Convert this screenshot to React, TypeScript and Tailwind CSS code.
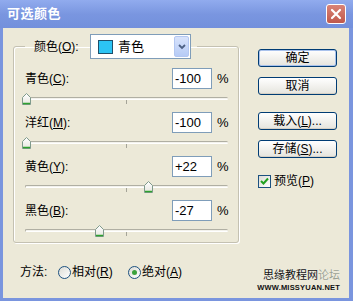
import React from "react";

const FONT = { fontFamily: '"Liberation Sans", "Noto Sans CJK SC", sans-serif' };

interface SliderRowProps {
  label: string;
  hotkey: string;
  value: number;
}

function Thumb() {
  return (
    <svg width="9" height="12" viewBox="0 0 9 12">
      <defs>
        <linearGradient id="tg" x1="0" y1="0" x2="0" y2="1">
          <stop offset="0" stopColor="#ffffff" />
          <stop offset="1" stopColor="#e6e6df" />
        </linearGradient>
      </defs>
      <polygon points="0.5,4.5 4.5,0.5 8.5,4.5 8.5,11.5 0.5,11.5" fill="url(#tg)" stroke="#7f9a8c" />
      <line x1="1" y1="10.5" x2="8" y2="10.5" stroke="#2ea12e" strokeWidth="1.5" />
    </svg>
  );
}

function SliderRow({ label, hotkey, value }: SliderRowProps) {
  const sign = value > 0 ? "+" : "";
  return (
    <div className="flex flex-col h-[44px]">
      <div className="flex items-center h-[21px]">
        <div className="ml-[11px] w-[147px] text-[12px] text-black">
          {label}(<u>{hotkey}</u>):
        </div>
        <div className="w-[40px] h-[21px] bg-white border border-[#7f9db9] flex items-center pl-[2px] text-[13px] text-black">
          {sign}
          {value}
        </div>
        <div className="ml-[5px] text-[13px] text-black">%</div>
      </div>
      <div className="relative ml-[8px] w-[208px] h-[23px]">
        <div className="absolute left-[3px] right-[2px] top-[8px] h-[3px] rounded-full bg-[#f3f2ec] border-t border-l border-[#b0afa3] border-b border-b-white" />
        <div className="absolute left-[104px] top-[11px] w-px h-[4px] bg-[#a5a498]" />
        <div className="absolute top-[4px]" style={{ left: 99.5 + value }}>
          <Thumb />
        </div>
      </div>
    </div>
  );
}

function XPButton({ children, primary }: { children: React.ReactNode; primary?: boolean }) {
  return (
    <div
      className={
        "w-[79px] h-[18px] rounded-[3px] border flex items-center justify-center text-[12px] text-black bg-gradient-to-b from-white to-[#e5e4dd] " +
        (primary
          ? "border-[#003c74] shadow-[inset_0_0_0_1px_#a9c2ec]"
          : "border-[#003c74] shadow-[inset_0_-1px_0_#d6d0c5]")
      }
    >
      {children}
    </div>
  );
}

function Radio({ checked }: { checked?: boolean }) {
  return (
    <div className="w-[13px] h-[13px] rounded-full border border-[#1c5180] bg-gradient-to-br from-[#dcdcd5] to-white flex items-center justify-center">
      {checked && <div className="w-[5px] h-[5px] rounded-full bg-[#3ba23b]" />}
    </div>
  );
}

export default function App() {
  return (
    <div className="w-[353px] h-[301px] flex flex-col bg-[#7a95de] overflow-hidden relative" style={FONT}>
      {/* title bar */}
      <div className="h-[28px] flex items-center justify-between pl-[7px] pr-[7px] bg-gradient-to-b from-[#91abee] via-[#7a96e0] to-[#7390dc]">
        <span className="text-white font-bold text-[13px] tracking-[0.5px]">可选颜色</span>
        <div className="w-[20px] h-[20px] rounded-[3px] border border-white bg-gradient-to-b from-[#d98377] to-[#c0594b] flex items-center justify-center">
          <svg width="12" height="12" viewBox="0 0 12 12">
            <path d="M2 2 L10 10 M10 2 L2 10" stroke="white" strokeWidth="2.2" strokeLinecap="round" />
          </svg>
        </div>
      </div>

      {/* body */}
      <div className="flex-1 flex ml-[3px] mr-[4px] mb-[3px] bg-[#ece9d8]">
        <div className="flex flex-col pl-[10px] pt-[6px]">
          <fieldset className="w-[226px] h-[209px] border border-[#c4c1b2] rounded-[3px] shadow-[1px_1px_0_#fff,inset_1px_1px_0_#fff]">
            <legend className="ml-[11px] pl-[9px] pr-[6px]">
              <div className="flex items-center h-[25px]">
                <span className="w-[56px] text-[12px] text-black">
                  颜色(<u>O</u>):
                </span>
                <div className="w-[101px] h-[25px] bg-white border border-[#7f9db9] flex items-center pl-[7px] pr-[1px]">
                  <div className="w-[15px] h-[14px] bg-[#2cc4f4] border border-[#1e4f6a]" />
                  <span className="ml-[5px] text-[13px] text-black flex-1">青色</span>
                  <div className="w-[15px] h-[21px] rounded-[2px] bg-gradient-to-b from-[#d8e3fb] to-[#b6cbf6] border border-[#b3c7f1] flex items-center justify-center">
                    <svg width="8" height="6" viewBox="0 0 8 6">
                      <path d="M1 1 L4 4 L7 1" stroke="#4d6185" strokeWidth="1.8" fill="none" />
                    </svg>
                  </div>
                </div>
              </div>
            </legend>
            <div className="pt-[9px] flex flex-col">
              <SliderRow label="青色" hotkey="C" value={-100} />
              <SliderRow label="洋红" hotkey="M" value={-100} />
              <SliderRow label="黄色" hotkey="Y" value={22} />
              <SliderRow label="黑色" hotkey="B" value={-27} />
            </div>
          </fieldset>

          <div className="flex items-center h-[16px] mt-[21px] pl-[7px] text-[12px] text-black">
            <span className="w-[38px]">方法:</span>
            <Radio />
            <span className="ml-[1px] w-[56px]">
              相对(<u>R</u>)
            </span>
            <Radio checked />
            <span className="ml-[1px]">
              绝对(<u>A</u>)
            </span>
          </div>
        </div>

        <div className="flex flex-col ml-[19px] pt-[21px]">
          <XPButton primary>确定</XPButton>
          <div className="mt-[10px]">
            <XPButton>取消</XPButton>
          </div>
          <div className="mt-[17px]">
            <XPButton>
              载入(<u>L</u>)...
            </XPButton>
          </div>
          <div className="mt-[10px]">
            <XPButton>
              存储(<u>S</u>)...
            </XPButton>
          </div>
          <div className="mt-[14px] flex items-center">
            <div className="w-[13px] h-[13px] border border-[#1c5180] bg-gradient-to-br from-[#dcdcd5] to-white flex items-center justify-center">
              <svg width="9" height="8" viewBox="0 0 9 8">
                <path d="M1 4 L3.5 6.5 L8 1.5" stroke="#21a121" strokeWidth="2" fill="none" />
              </svg>
            </div>
            <span className="ml-[3px] text-[12px] text-black">
              预览(<u>P</u>)
            </span>
          </div>
        </div>
      </div>

      {/* watermark */}
      <div className="absolute left-[248px] top-[270px] flex flex-col items-end w-[92px] leading-none whitespace-nowrap">
        <span className="text-[11px] text-[#111] [text-shadow:0_0_1px_#fff]">
          思缘教程网<span className="text-[#9aa090]">论坛</span>
        </span>
        <span className="mt-[3px] text-[7.5px] font-bold tracking-[0.2px] text-[#111]">WWW.MISSYUAN.NET</span>
      </div>
    </div>
  );
}
